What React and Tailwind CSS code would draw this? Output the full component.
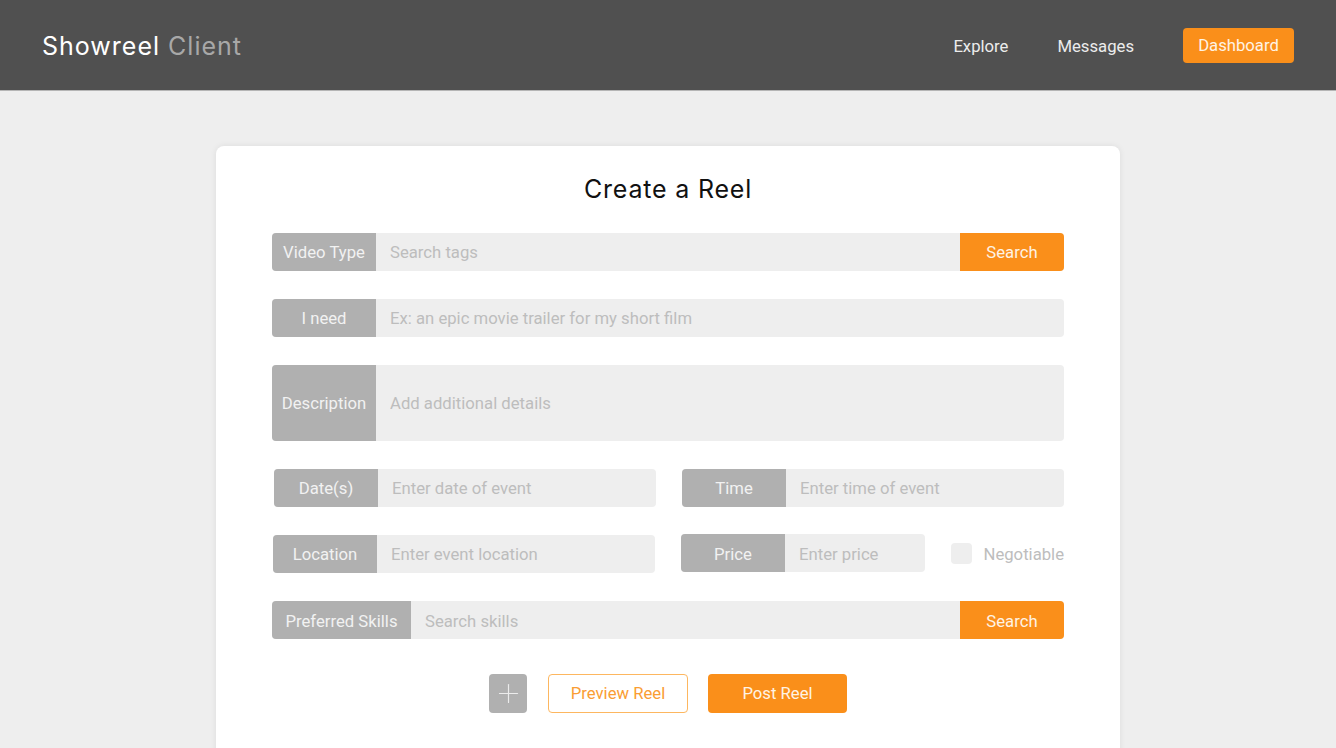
import React from "react";
import { Plus } from "lucide-react";

const Field = ({ label, placeholder, labelWidth = "w-[104px]", className = "h-[38px]", nudge = "pt-[1px]", action }) => (
	<div className={`flex rounded-[4px] bg-[#eeeeee] ${className}`}>
		<span className={`flex shrink-0 items-center justify-center rounded-l-[4px] bg-[#b0b0b0] text-[16.7px] text-[#f2f2f2] ${nudge} ${labelWidth}`}>
			{label}
		</span>
		<input
			className={`min-w-0 flex-1 bg-transparent px-[14px] text-[16.7px] text-[#555] outline-none placeholder:text-[#bdbdbd] ${nudge}`}
			placeholder={placeholder}
		/>
		{action && (
			<button className={`w-[104px] shrink-0 rounded-r-[4px] bg-[#fa8f1a] text-[16.7px] text-[#fff3e4] ${nudge}`}>
				{action}
			</button>
		)}
	</div>
);

const App = () => {
	return (
		<div className="h-screen overflow-hidden bg-[#eeeeee] font-['Roboto',sans-serif]">
			<header className="flex h-[91px] items-center justify-between border-b border-[#b5b5b5] bg-[#505050] pl-[42px] pr-[42px]">
				<div className="pt-[3px] font-['Inter',sans-serif] text-[25px] tracking-[1px] text-white">
					Showreel <span className="text-[#a8a8a8]">Client</span>
				</div>
				<nav className="flex items-center text-[16.7px] text-[#ececec]">
					<a className="mr-[49px] pt-[3px]">Explore</a>
					<a className="mr-[49px] pt-[3px]">Messages</a>
					<a className="flex h-[35px] w-[111px] items-center justify-center rounded-[4px] bg-[#fa8f1a] pt-[1px] text-[#fff3e4]">
						Dashboard
					</a>
				</nav>
			</header>

			<main className="mx-auto mt-[55px] w-[904px] rounded-[8px] bg-white px-[56px] pb-[80px] pt-[26px] shadow-[0_0_6px_rgba(0,0,0,0.08)]">
				<h1 className="mb-[27px] h-[34px] text-center font-['Inter',sans-serif] text-[25px] font-normal leading-[34px] tracking-[0.8px] text-[#111]">
					Create a Reel
				</h1>

				<div className="flex flex-col">
					<Field label="Video Type" placeholder="Search tags" action="Search" />
					<div className="mt-[28px]">
						<Field label="I need" placeholder="Ex: an epic movie trailer for my short film" />
					</div>
					<div className="mt-[28px]">
						<Field label="Description" placeholder="Add additional details" className="h-[76px]" />
					</div>

					<div className="mt-[28px] flex justify-between">
						<div className="ml-[2px] w-[382px]">
							<Field label="Date(s)" placeholder="Enter date of event" />
						</div>
						<div className="w-[382px]">
							<Field label="Time" placeholder="Enter time of event" />
						</div>
					</div>

					<div className="mt-[27px] flex items-start">
						<div className="ml-[1px] mt-[1px] w-[382px]">
							<Field label="Location" placeholder="Enter event location" />
						</div>
						<div className="ml-[26px] w-[244px]">
							<Field label="Price" placeholder="Enter price" nudge="pt-[3px]" />
						</div>
						<label className="ml-auto flex h-[38px] items-center text-[16.7px] text-[#bdbdbd]">
							<span className="mr-[11px] h-[21px] w-[21px] rounded-[4px] bg-[#eeeeee]" />
							<span className="pt-[3px]">Negotiable</span>
						</label>
					</div>

					<div className="mt-[28px]">
						<Field label="Preferred Skills" labelWidth="w-[139px]" placeholder="Search skills" nudge="pt-[3px]" action="Search" />
					</div>

					<div className="mt-[35px] flex items-center justify-center">
						<button className="mr-[21px] flex h-[39px] w-[38px] items-center justify-center rounded-[4px] bg-[#b0b0b0] text-[#ececec]">
							<Plus size={31} strokeWidth={0.9} />
						</button>
						<button className="mr-[20px] h-[39px] w-[140px] rounded-[4px] border border-[#fdb760] pt-[1px] text-[16.7px] text-[#fa9d34]">
							Preview Reel
						</button>
						<button className="h-[39px] w-[139px] rounded-[4px] bg-[#fa8f1a] pt-[1px] text-[16.7px] text-[#fff3e4]">
							Post Reel
						</button>
					</div>
				</div>
			</main>
		</div>
	);
};

export default App;
